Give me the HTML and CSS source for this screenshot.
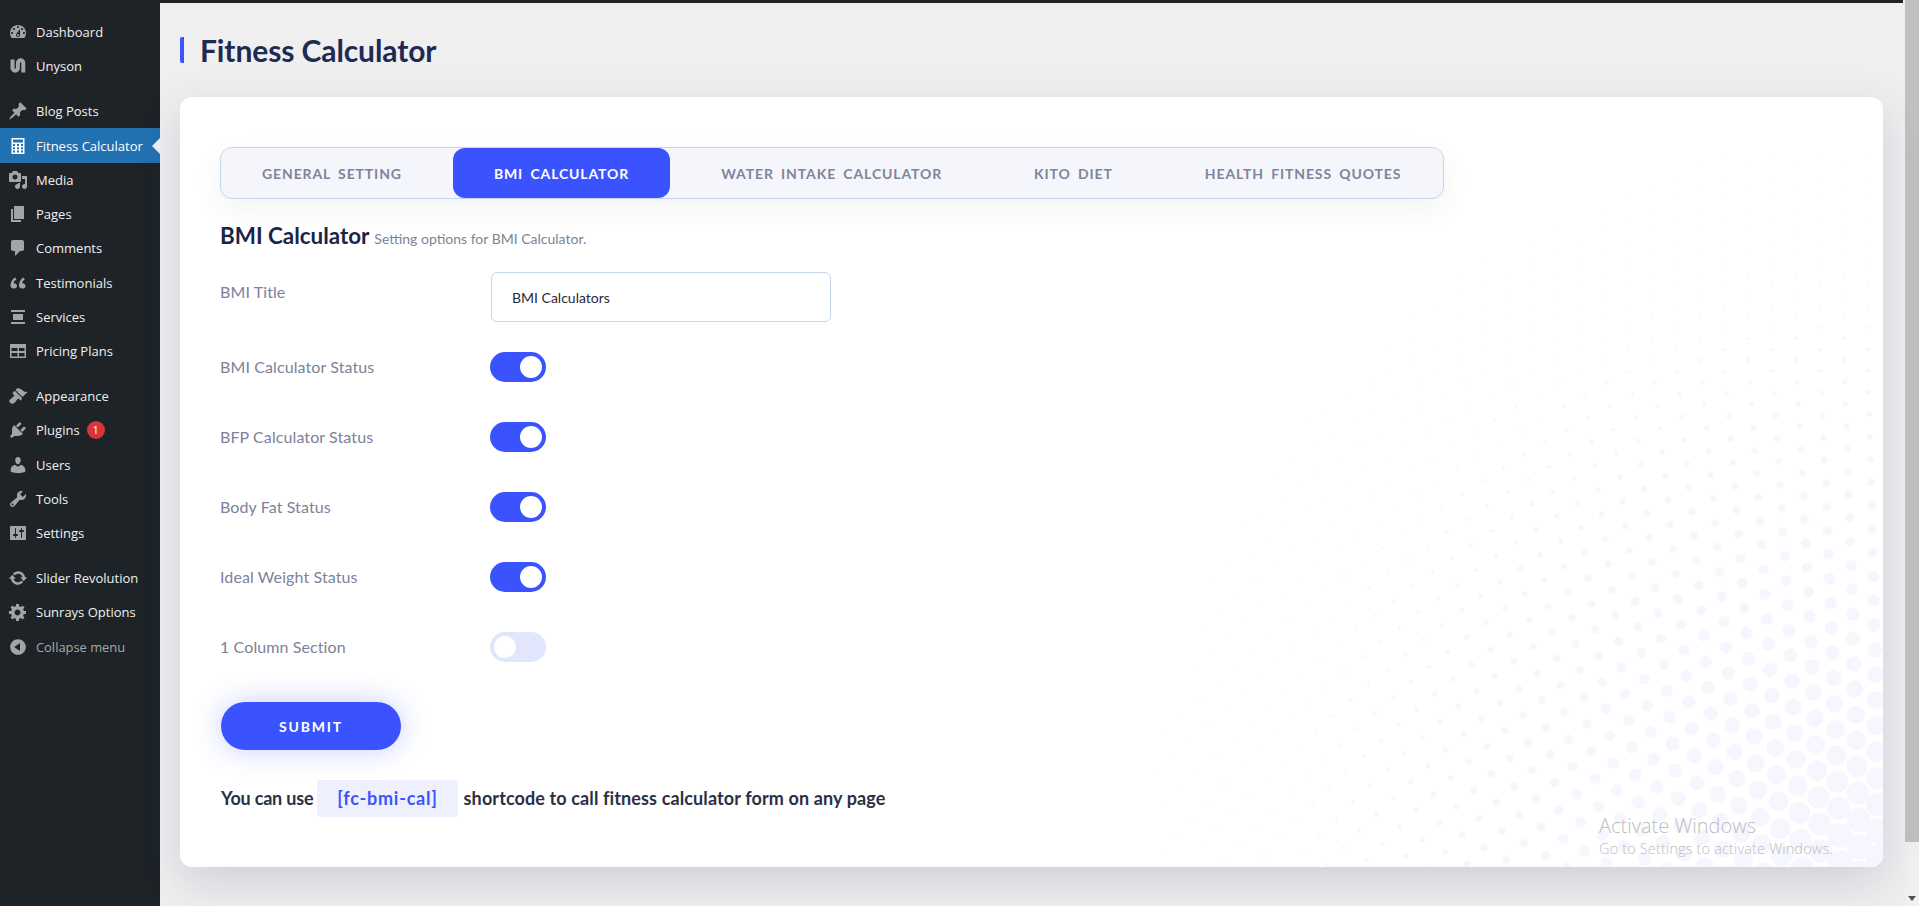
FILE: index.html
```html
<!DOCTYPE html>
<html lang="en">
<head>
<meta charset="utf-8">
<title>Fitness Calculator</title>
<link rel="stylesheet" href="styles.css">
</head>
<body>
<div class="page">
  <div class="topbar"></div>
  <div class="shell">
    <nav class="sidebar">
      <ul class="menu">
        <li class="item"><svg class="ico" viewBox="0 0 20 20"><path d="M3.76 16h12.48c1.1-1.37 1.76-3.11 1.76-5 0-4.42-3.58-8-8-8s-8 3.58-8 8c0 1.89.66 3.63 1.76 5zM10 4c.55 0 1 .45 1 1s-.45 1-1 1-1-.45-1-1 .45-1 1-1zM6 6c.55 0 1 .45 1 1s-.45 1-1 1-1-.45-1-1 .45-1 1-1zm8 0c.55 0 1 .45 1 1s-.45 1-1 1-1-.45-1-1 .45-1 1-1zm-5.37 5.55L12 7v6c0 1.1-.9 2-2 2s-2-.9-2-2c0-.57.24-1.08.63-1.45zM4 10c.55 0 1 .45 1 1s-.45 1-1 1-1-.45-1-1 .45-1 1-1zm12 0c.55 0 1 .45 1 1s-.45 1-1 1-1-.45-1-1 .45-1 1-1zm-5 3c0-.55-.45-1-1-1s-1 .45-1 1 .45 1 1 1 1-.45 1-1z" fill-rule="evenodd"/></svg><span>Dashboard</span></li>
        <li class="item"><svg class="ico" viewBox="0 0 20 20"><path class="ico-stroke" d="M4.5 3.500V12a2.700 2.700 0 0 0 5.400 0V7a2.700 2.700 0 0 1 5.400 0v9.500"/></svg><span>Unyson</span></li>
        <li class="sep"></li>
        <li class="item"><svg class="ico" viewBox="0 0 20 20"><path d="M10.44 3.02l1.82-1.82 6.36 6.35-1.83 1.82c-1.05-.68-2.48-.57-3.41.36l-.75.75c-.92.93-1.04 2.35-.35 3.41l-1.83 1.82-2.41-2.41-2.8 2.79c-.42.42-3.38 2.71-3.8 2.29s1.86-3.39 2.28-3.81l2.79-2.79L4.1 9.36l1.83-1.82c1.05.69 2.48.57 3.4-.36l.75-.75c.93-.92 1.05-2.35.36-3.41z"/></svg><span>Blog Posts</span></li>
        <li class="item active"><svg class="ico" viewBox="0 0 20 20"><path fill-rule="evenodd" d="M3.5 2h13v16h-13zM5 3.500v3h10v-3zM5 8v2h2V8zm4 0v2h2V8zm4 0v2h2V8zM5 11.200v2h2v-2zm4 0v2h2v-2zm4 0v2h2v-2zM5 14.500v2h2v-2zm4 0v2h2v-2zm4 0v2h2v-2z"/></svg><span>Fitness Calculator</span></li>
        <li class="item"><svg class="ico" viewBox="0 0 20 20"><path d="M13 11V4c0-.55-.45-1-1-1h-1.670L9 1H5L3.670 3H2c-.55 0-1 .45-1 1v7c0 .55.45 1 1 1h10c.55 0 1-.45 1-1zM7 4.500c1.380 0 2.500 1.120 2.500 2.500S8.380 9.500 7 9.500 4.500 8.380 4.500 7 5.620 4.500 7 4.500zM14 6h5v10.500c0 1.380-1.120 2.500-2.500 2.500S14 17.880 14 16.500s1.120-2.500 2.500-2.500c.17 0 .34.02.5.05V9h-3V6zm-4 8.050V13h2v3.500c0 1.380-1.120 2.500-2.500 2.500S7 17.880 7 16.500 8.120 14 9.500 14c.17 0 .34.02.5.05z" fill-rule="evenodd"/></svg><span>Media</span></li>
        <li class="item"><svg class="ico" viewBox="0 0 20 20"><path d="M6 15V2h10v13H6zm-1 1h8v2H3V5h2v11z"/></svg><span>Pages</span></li>
        <li class="item"><svg class="ico" viewBox="0 0 20 20"><path d="M5 2h9c1.100 0 2 .9 2 2v7c0 1.100-.9 2-2 2h-2l-5 5v-5H5c-1.100 0-2-.9-2-2V4c0-1.100.9-2 2-2z"/></svg><span>Comments</span></li>
        <li class="item"><svg class="ico" viewBox="0 0 20 20"><path d="M9 13.200c0-1-.3-1.700-.8-2.200-.7-.7-1.800-.8-2.500-.6-.2-1.400 1-2.800 2.700-3.800L7.200 4.500C4.500 6 2.500 8.800 2.500 12.200c0 2.200 1.400 3.300 3 3.300S9 14.600 9 13.200zm8.500 0c0-1-.3-1.700-.8-2.200-.7-.7-1.800-.8-2.500-.6-.2-1.400 1-2.800 2.700-3.800l-1.700-2.100C13 6 11 8.800 11 12.200c0 2.200 1.400 3.300 3 3.300s3.500-.9 3.500-2.300z"/></svg><span>Testimonials</span></li>
        <li class="item"><svg class="ico" viewBox="0 0 20 20"><path d="M3 3h14v2H3V3zm2 4h10v6H5V7zm-2 8h14v2H3v-2z"/></svg><span>Services</span></li>
        <li class="item"><svg class="ico" viewBox="0 0 20 20"><path fill-rule="evenodd" d="M2 3h16v14H2zM3.500 7v3h6V7zm7.500 0v3h5.500V7zM3.500 12v3.500h6V12zm7.500 0v3.500h5.500V12z"/></svg><span>Pricing Plans</span></li>
        <li class="sep"></li>
        <li class="item"><svg class="ico" viewBox="0 0 20 20"><path d="M14.480 11.060L7.410 3.990l1.500-1.500c.5-.56 2.300-.47 3.510.32 1.210.8 1.430 1.280 2.910 2.100 1.180.64 2.450 1.260 4.450.85zm-.71.71L6.700 4.700 4.930 6.470c-.39.39-.39 1.020 0 1.410l1.060 1.060c.39.39.39 1.030 0 1.420-.6.6-1.430 1.110-2.210 1.690-.35.26-.7.53-1.010.84C1.430 13.230.5 15.100 2.200 16.800s3.560.77 4.910-.58c.31-.31.58-.66.84-1.010.58-.78 1.090-1.610 1.690-2.210.39-.39 1.020-.39 1.410 0l1.060 1.060c.39.39 1.020.39 1.410 0z"/></svg><span>Appearance</span></li>
        <li class="item"><svg class="ico" viewBox="0 0 20 20"><path d="M13.110 4.360L9.870 7.600 8 5.730l3.240-3.240c.35-.34 1.050-.2 1.560.32.52.51.66 1.210.31 1.550zm-8 1.770l.91-1.120 9.010 9.010-1.190.84c-.71.71-2.630 1.160-3.820 1.160H6.140L4.900 17.260c-.59.59-1.540.59-2.120 0-.59-.58-.59-1.530 0-2.120l1.240-1.240v-3.880c0-1.130.4-3.190 1.090-3.890zm7.260 3.970l3.240-3.240c.34-.35 1.040-.21 1.550.31.52.51.66 1.210.31 1.550l-3.240 3.250z"/></svg><span>Plugins</span><span class="badge">1</span></li>
        <li class="item"><svg class="ico" viewBox="0 0 20 20"><path d="M10 9.250c-2.270 0-2.730-3.440-2.730-3.440C7 4.020 7.820 2 9.970 2c2.160 0 2.980 2.020 2.710 3.810 0 0-.41 3.440-2.680 3.440zm0 2.570L12.720 10c2.390 0 4.520 2.330 4.520 4.530v2.490s-3.650 1.130-7.240 1.130c-3.650 0-7.240-1.130-7.240-1.130v-2.490c0-2.250 1.940-4.480 4.470-4.480z"/></svg><span>Users</span></li>
        <li class="item"><svg class="ico" viewBox="0 0 20 20"><path d="M16.680 9.770c-1.340 1.340-3.300 1.670-4.950.99l-5.410 6.520c-.99.99-2.590.99-3.580 0s-.99-2.590 0-3.570l6.520-5.420c-.68-1.650-.35-3.610.99-4.950 1.280-1.280 3.120-1.620 4.720-1.060l-2.890 2.890 2.820 2.820 2.860-2.870c.53 1.580.18 3.390-1.080 4.650zM3.810 16.210c.4.39 1.040.39 1.430 0 .4-.4.4-1.040 0-1.430-.39-.4-1.030-.4-1.430 0-.39.39-.39 1.030 0 1.430z" fill-rule="evenodd"/></svg><span>Tools</span></li>
        <li class="item"><svg class="ico" viewBox="0 0 20 20"><path fill-rule="evenodd" d="M18 16V4c0-.55-.45-1-1-1H3c-.55 0-1 .45-1 1v12c0 .55.45 1 1 1h14c.55 0 1-.45 1-1zM8 11h1c.55 0 1 .45 1 1s-.45 1-1 1H8v1.500c0 .28-.22.5-.5.5s-.5-.22-.5-.5V13H6c-.55 0-1-.45-1-1s.45-1 1-1h1V5.500c0-.28.22-.5.5-.5s.5.22.5.5V11zm5-2h-1c-.55 0-1-.45-1-1s.45-1 1-1h1V5.500c0-.28.22-.5.5-.5s.5.22.5.5V7h1c.55 0 1 .45 1 1s-.45 1-1 1h-1v5.500c0 .28-.22.5-.5.5s-.5-.22-.5-.5V9z"/></svg><span>Settings</span></li>
        <li class="sep"></li>
        <li class="item"><svg class="ico" viewBox="0 0 20 20"><path d="M10.200 3.280c3.530 0 6.430 2.610 6.920 6h2.080l-3.500 4-3.500-4h2.320c-.45-1.970-2.210-3.450-4.320-3.450-1.450 0-2.730.71-3.540 1.780L4.950 5.660C6.230 4.200 8.110 3.280 10.200 3.280zm-.4 13.440c-3.520 0-6.430-2.610-6.920-6H.8l3.500-4c1.170 1.330 2.330 2.670 3.500 4H5.480c.45 1.970 2.210 3.450 4.320 3.450 1.450 0 2.730-.71 3.540-1.780l1.710 1.950c-1.280 1.460-3.150 2.380-5.250 2.380z"/></svg><span>Slider Revolution</span></li>
        <li class="item"><svg class="ico" viewBox="0 0 20 20"><path fill-rule="evenodd" d="M18 12h-2.180c-.17.7-.44 1.350-.81 1.930l1.540 1.540-2.100 2.100-1.540-1.540c-.58.36-1.230.63-1.910.79V19H8v-2.180c-.68-.16-1.330-.43-1.910-.79l-1.540 1.540-2.120-2.120 1.540-1.540c-.36-.58-.63-1.230-.79-1.910H1V9.030h2.170c.16-.7.44-1.350.8-1.940L2.430 5.550l2.100-2.100 1.540 1.540c.58-.37 1.240-.64 1.930-.81V2h3v2.180c.68.16 1.330.43 1.910.79l1.540-1.540 2.120 2.120-1.540 1.540c.36.59.64 1.240.8 1.940H18V12zm-8.500 1.500c1.660 0 3-1.340 3-3s-1.340-3-3-3-3 1.340-3 3 1.340 3 3 3z"/></svg><span>Sunrays Options</span></li>
        <li class="item collapse"><svg class="ico" viewBox="0 0 20 20"><path fill-rule="evenodd" d="M10 2.160c4.330 0 7.840 3.510 7.840 7.840s-3.510 7.840-7.840 7.840S2.160 14.330 2.160 10 5.710 2.160 10 2.160zm2 11.720V6.120L6.180 9.970z"/></svg><span>Collapse menu</span></li>
      </ul>
    </nav>
    <main class="main">
      <h1 class="title">Fitness Calculator</h1>
      <section class="card">
        <div class="halftone"><svg id="dots" width="1703" height="770" viewBox="0 0 1703 770"></svg></div>
        <div class="content">
          <div class="tabs">
            <a class="tab">General Setting</a>
            <a class="tab on">BMI Calculator</a>
            <a class="tab">Water Intake Calculator</a>
            <a class="tab">Kito Diet</a>
            <a class="tab">Health Fitness Quotes</a>
          </div>
          <h2 class="heading">BMI Calculator <small>Setting options for BMI Calculator.</small></h2>
          <div class="row row-input">
            <label class="label label-top">BMI Title</label>
            <input class="text" type="text" value="BMI Calculators">
          </div>
          <div class="row"><span class="label">BMI Calculator Status</span><span class="toggle on"></span></div>
          <div class="row"><span class="label">BFP Calculator Status</span><span class="toggle on"></span></div>
          <div class="row"><span class="label">Body Fat Status</span><span class="toggle on"></span></div>
          <div class="row"><span class="label">Ideal Weight Status</span><span class="toggle on"></span></div>
          <div class="row"><span class="label">1 Column Section</span><span class="toggle"></span></div>
          <button class="submit" type="button">SUBMIT</button>
          <p class="note"><span class="lead">You can use</span> <code class="code">[fc-bmi-cal]</code> shortcode to call fitness calculator form on any page</p>
        </div>
      </section>
    </main>
  </div>
</div>
<div class="scrollbar"><div class="thumb"></div><div class="track"><span class="arrow"></span></div></div>
<div class="watermark"><div class="wm-a">Activate Windows</div><div class="wm-b">Go to Settings to activate Windows.</div></div>
<script src="script.js"></script>
</body>
</html>
```
FILE: styles.css
```css
* { box-sizing: border-box; }
html, body { margin: 0; height: 906px; overflow: hidden; }
body {
  display: flex;
  background: #efeff0;
  font-family: "Lato", "Liberation Sans", sans-serif;
}
.page { flex: 1; min-width: 0; display: flex; flex-direction: column; }
.topbar { height: 3px; background: #1d2327; margin-right: 2px; flex: none; }
.shell { flex: 1; display: flex; min-height: 0; }

.sidebar { width: 160px; flex: none; background: #1d2327; padding-top: 12px; }
.menu { list-style: none; margin: 0; padding: 0; }
.item {
  position: relative;
  height: 34.28px;
  display: flex;
  align-items: center;
  gap: 8px;
  padding-left: 8px;
  color: #f0f0f1;
  font: 13px "Open Sans", "Liberation Sans", sans-serif;
}
.sep { height: 10.7px; }
.ico { width: 20px; height: 20px; flex: none; fill: #a0a5aa; }
.ico-stroke { fill: none; stroke: #a0a5aa; stroke-width: 4; }
.item.active { background: #2271b1; color: #fff; }
.item.active .ico { fill: #fff; }
.item.active::after {
  content: "";
  position: absolute;
  right: 0;
  top: 50%;
  margin-top: -8px;
  border: 8px solid transparent;
  border-right-color: #f0f0f1;
  border-left-width: 0;
}
.item.collapse { color: #a7aaad; font-size: 12.9px; }
.badge {
  width: 18px;
  height: 18px;
  border-radius: 50%;
  margin-left: -1px;
  background: #d63638;
  color: #fff;
  font-size: 11px;
  line-height: 18px;
  text-align: center;
}

.main { flex: 1; min-width: 0; padding: 0 22px 0 20px; }
.title {
  margin: 34px 0 34px;
  height: 26px;
  padding-left: 16px;
  border-left: 4px solid #3a53ff;
  border-radius: 2px;
  color: #1e2a52;
  font-size: 30px;
  font-weight: 700;
  line-height: 26px;
  letter-spacing: -0.1px;
}
.card {
  position: relative;
  height: 770px;
  padding: 50px 40px;
  background: #fff;
  border-radius: 12px;
  box-shadow: 0 15px 45px rgba(40, 50, 80, .16);
}
.halftone { position: absolute; inset: 0; border-radius: 12px; overflow: hidden; }
.halftone svg { display: block; fill: #f6f6fe; }
.content { position: relative; }

.tabs {
  display: flex;
  gap: 10px;
  width: 1224px;
  height: 52px;
  background: #f4f6fb;
  border: 1px solid #c5d5ea;
  border-radius: 12px;
  box-shadow: 0 10px 30px rgba(30, 40, 80, .06);
}
.tab {
  padding: 0 41px;
  display: flex;
  align-items: center;
  border-radius: 12px;
  color: #7f849c;
  font-size: 14px;
  font-weight: 700;
  letter-spacing: .88px;
  word-spacing: 3px;
  text-transform: uppercase;
  white-space: nowrap;
}
.tab.on { background: #3a53ff; color: #fff; }

.heading {
  margin: 20px 0 19px;
  height: 34px;
  color: #1b2448;
  font-size: 22.4px;
  font-weight: 700;
  line-height: 34px;
}
.heading small { color: #7d8299; font-size: 14px; font-weight: 400; }

.row { display: flex; align-items: center; height: 30px; margin-bottom: 40px; }
.row-input { align-items: flex-start; height: 50px; margin-bottom: 30px; }
.label { width: 270px; flex: none; padding-bottom: 2px; color: #7d8299; font-size: 16px; letter-spacing: .1px; }
.label-top { line-height: 40px; }
.text {
  width: 340px;
  height: 50px;
  margin-left: 1px;
  padding: 0 20px;
  border: 1px solid #c5d5ea;
  border-radius: 6px;
  background: #fff;
  color: #2a2a35;
  font: 14px "Lato", "Liberation Sans", sans-serif;
}
.toggle {
  position: relative;
  width: 56px;
  height: 30px;
  border-radius: 15px;
  background: #e2e6fd;
}
.toggle.on { background: #3a53ff; }
.toggle::after {
  content: "";
  position: absolute;
  top: 4px;
  left: 4px;
  width: 22px;
  height: 22px;
  border-radius: 50%;
  background: #fff;
}
.toggle.on::after { left: 30px; }

.submit {
  display: block;
  width: 180px;
  height: 48px;
  margin: 0 0 30px 1px;
  padding: 0;
  border: 0;
  border-radius: 24px;
  background: #3a53ff;
  box-shadow: 0 0 28px rgba(58, 83, 255, .28);
  color: #fff;
  font: 700 14px "Lato", sans-serif;
  letter-spacing: 1.8px;
}
.note {
  margin: 0 0 0 1px;
  height: 37px;
  color: #2c2f45;
  font-size: 18px;
  font-weight: 700;
  line-height: 37px;
  letter-spacing: .12px;
  white-space: nowrap;
}
.lead { letter-spacing: -.2px; }
.code {
  display: inline-block;
  height: 37px;
  margin: 0 1px 0 -1px;
  padding: 0 20.5px;
  border-radius: 3px;
  background: #eef0fe;
  color: #3a53ff;
  font: 700 18px/37px "Lato", sans-serif;
  letter-spacing: .75px;
}

.scrollbar { width: 14px; flex: none; display: flex; flex-direction: column; background: #f1f1f1; }
.thumb { height: 842px; background: #c1c1c1; }
.track { flex: 1; display: flex; align-items: flex-end; justify-content: center; padding-bottom: 5px; }
.arrow { border: 4px solid transparent; border-top: 5px solid #505050; border-bottom-width: 0; }

.watermark {
  position: absolute;
  left: 1599px;
  top: 813px;
  color: #bdbdbd;
  font-family: "Open Sans", "Liberation Sans", sans-serif;
  font-weight: 300;
  white-space: nowrap;
}
.wm-a { font-size: 20px; line-height: 26px; }
.wm-b { font-size: 14.5px; line-height: 20px; letter-spacing: .15px; }
```
FILE: script.js
```js
// Decorative halftone in the card's lower right corner.
(function () {
  var svg = document.getElementById('dots');
  var ox = 180, oy = 97, ex = 1883, ey = 867, ns = svg.namespaceURI;
  for (var n = -26; n < 62; n++) {
    var y = 360 + n * 10.7;
    for (var c = -2; c < 40; c++) {
      var x = 1892 - c * 48 - (n % 2 ? 24 : 0);
      var t = Math.max(0, y - 360), s = t / 440;
      var py = y + t * t * 0.0003 + (ex - x) * 0.1 * s;
      var px = ex - (ex - x) * (1 - 0.2 * s) + 8 * s;
      var d = Math.hypot(ex - px, ey - py);
      var r = 14 * Math.pow(Math.max(0, 1 - d / 900), 2.3);
      if (r < 0.3) continue;
      var e = document.createElementNS(ns, 'circle');
      e.setAttribute('cx', (px - ox).toFixed(1));
      e.setAttribute('cy', (py - oy).toFixed(1));
      e.setAttribute('r', r.toFixed(1));
      svg.appendChild(e);
    }
  }
})();
```
